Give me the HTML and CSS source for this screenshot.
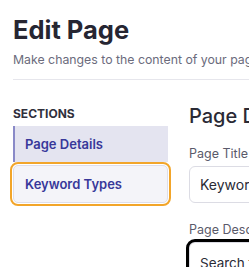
FILE: index.html
```html
<!DOCTYPE html>
<html lang="en">
<head>
<meta charset="utf-8">
<title>Edit Page</title>
<link rel="stylesheet" href="styles.css">
</head>
<body>
<div class="page">
  <header class="header">
    <h1 class="title">Edit Page</h1>
    <p class="subtitle">Make changes to the content of your page and save when you are done.</p>
  </header>
  <div class="content">
    <nav class="sidebar">
      <div class="sidebar-label">SECTIONS</div>
      <ul class="nav-list">
        <li class="nav-item nav-item-active">Page Details</li>
        <li class="nav-item nav-item-focus">Keyword Types</li>
      </ul>
    </nav>
    <main class="main">
      <h2 class="section-title">Page Details</h2>
      <div class="field">
        <label class="field-label">Page Title</label>
        <div class="input">Keyword Types</div>
      </div>
      <div class="field">
        <label class="field-label">Page Description</label>
        <div class="input input-focus">Search for keywords by type</div>
      </div>
    </main>
  </div>
</div>
</body>
</html>
```
FILE: styles.css
```css
html, body {
  margin: 0;
  padding: 0;
  overflow: hidden;
  background: #ffffff;
}
body {
  font-family: Inter, "Noto Sans", sans-serif;
  color: #2a2a36;
}
.page {
  width: 700px;
  padding: 14px 13px 0 13px;
}
.header {
  border-bottom: 1px solid #e6e6ec;
  padding-bottom: 9px;
}
.title {
  margin: 0;
  font-size: 25.5px;
  line-height: 32px;
  font-weight: 700;
  color: #262632;
}
.subtitle {
  margin: 4px 0 0 0;
  font-size: 12.3px;
  line-height: 20px;
  color: #6b6b7c;
  white-space: nowrap;
}
.content {
  display: flex;
  gap: 21px;
  padding-top: 22px;
}
.sidebar {
  width: 155px;
  flex: none;
  padding-top: 4px;
}
.sidebar-label {
  font-size: 12px;
  line-height: 16px;
  font-weight: 700;
  color: #30303c;
  margin-bottom: 4px;
}
.nav-list {
  list-style: none;
  margin: 0;
  padding: 0;
  display: flex;
  flex-direction: column;
  gap: 3px;
}
.nav-item {
  font-size: 13px;
  line-height: 16px;
  font-weight: 600;
  color: #38389a;
  padding: 10px 10px 10px 10px;
  border-left: 2px solid transparent;
  border-radius: 2px;
}
.nav-item-active {
  background: #e4e4f0;
  border-left-color: #8a8ac8;
  border-radius: 0;
}
.nav-item-focus {
  background: #f4f4f9;
  border: 1px solid #dedeea;
  padding-left: 11px;
  padding-top: 10px;
  padding-bottom: 10px;
  border-radius: 5px;
  outline: 2px solid #f2a52a;
  outline-offset: 1px;
}
.main {
  flex: 1;
}
.section-title {
  margin: 0;
  font-size: 20px;
  line-height: 28px;
  font-weight: 500;
  color: #2a2a35;
}
.field {
  margin-top: 16px;
}
.field + .field {
  margin-top: 19px;
}
.field-label {
  display: block;
  font-size: 12.5px;
  line-height: 16px;
  color: #5a5a6a;
  margin-bottom: 4px;
}
.input {
  height: 37px;
  box-sizing: border-box;
  border: 1px solid #dcdce4;
  border-radius: 6px;
  padding: 0 10px;
  font-size: 14px;
  line-height: 35px;
  color: #2a2a35;
  width: 380px;
}
.input-focus {
  height: 80px;
  line-height: 20px;
  padding-top: 10px;
  font-size: 13.5px;
  outline: 3px solid #000000;
  border-radius: 6px;
}
```
